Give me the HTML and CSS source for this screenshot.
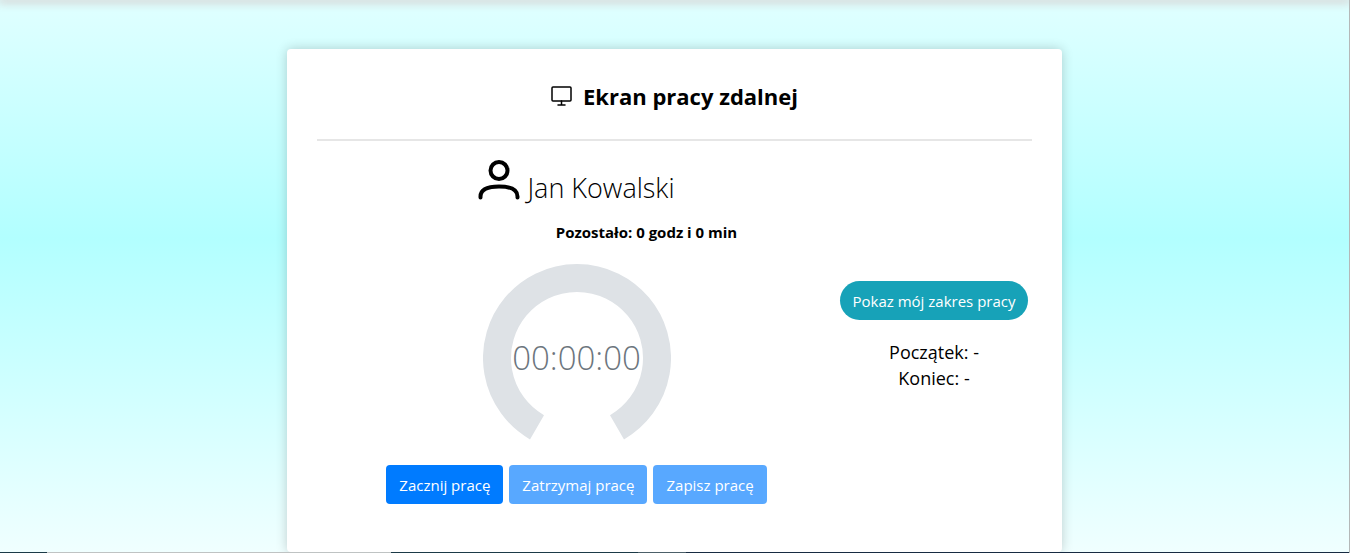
FILE: index.html
```html
<!DOCTYPE html>
<html lang="pl">
<head>
<meta charset="utf-8">
<title>Ekran pracy zdalnej</title>
<link rel="stylesheet" href="styles.css">
</head>
<body>
<div class="page">
  <div class="topbar"></div>
  <main class="card">
    <h1 class="title">
      <svg class="title-icon" viewBox="0 0 22 20" aria-hidden="true"><rect x="1" y="1" width="19" height="14" rx="1"/><path d="M10.500 15v4M7 19h7"/></svg>
      <span>Ekran pracy zdalnej</span>
    </h1>
    <hr class="rule">
    <div class="columns">
      <section class="work">
        <div class="user">
          <svg class="user-icon" viewBox="0 0 42 40" aria-hidden="true"><circle cx="21" cy="10.500" r="8.500"/><path d="M2.500 37.500v-1C2.500 29 10 26.500 21 26.500s18.500 2.500 18.500 10v1"/></svg>
          <span class="user-name">Jan Kowalski</span>
        </div>
        <p class="left-time">Pozostało: 0 godz i 0 min</p>
        <div class="gauge">
          <svg class="gauge-ring" viewBox="0 0 188 188" aria-hidden="true"><path d="M54 163.300A80 80 0 1 1 134 163.300"/></svg>
          <span class="gauge-value">00:00:00</span>
        </div>
        <div class="actions">
          <button class="btn" type="button">Zacznij pracę</button>
          <button class="btn" type="button" disabled>Zatrzymaj pracę</button>
          <button class="btn" type="button" disabled>Zapisz pracę</button>
        </div>
      </section>
      <section class="range">
        <button class="btn btn-info" type="button">Pokaz mój zakres pracy</button>
        <p class="range-text">Początek: -<br>Koniec: -</p>
      </section>
    </div>
  </main>
  <div class="bottom-line"></div>
</div>
</body>
</html>
```
FILE: styles.css
```css
* { box-sizing: border-box; }
body {
  margin: 0;
  color: #000;
  font-family: "Open Sans", "Noto Sans", sans-serif;
  font-size: 15px;
  line-height: 24px;
}
.page {
  min-height: 100vh;
  display: flex;
  flex-direction: column;
  overflow: hidden;
  border-right: 1px solid #b4b8b8;
  background: linear-gradient(#e0ffff, #b2ffff 43%, #f0ffff);
}
.topbar { box-shadow: 0 0 10px 2px rgba(200, 160, 160, .8); }
.card {
  width: calc(100% - 32px);
  max-width: 775px;
  margin: 49px auto 0;
  padding: 30px 30px 48px;
  border-radius: 4px;
  background: #fff;
  box-shadow: 0 0 12px rgba(0, 0, 0, .2);
}
.title {
  display: flex;
  justify-content: center;
  align-items: center;
  gap: 10px;
  margin: 0;
  font-size: 22px;
  line-height: 34px;
  font-weight: 700;
}
.title-icon { width: 22px; height: 20px; fill: none; stroke: #000; stroke-width: 1.500; stroke-linecap: round; }
.rule { margin: 26px 0 20px; border: 0; border-top: 2px solid #e6e6e6; }
.columns { display: grid; grid-template-columns: 1fr 196px; }
.work { display: flex; flex-direction: column; align-items: center; }
.user { display: flex; align-items: flex-end; gap: 7px; height: 43px; }
.user-icon { width: 42px; height: 40px; margin-bottom: 4px; fill: none; stroke: #000; stroke-width: 4; stroke-linecap: round; }
.user-name { font-size: 27px; line-height: 32px; font-weight: 350; }
.left-time { margin: 16px 0 20px; padding-left: 140px; font-weight: 700; }
.gauge { display: grid; place-items: center; width: 188px; height: 188px; }
.gauge > * { grid-area: 1 / 1; }
.gauge-ring { width: 100%; fill: none; stroke: #dee2e6; stroke-width: 28; }
.gauge-value { font-size: 33px; font-weight: 350; color: #6c757d; }
.actions { display: flex; gap: 6px; margin-top: 13px; }
.btn {
  height: 39px;
  padding: 0 13px;
  border: 0;
  border-radius: 4px;
  background: #007bff;
  color: #fff;
  font: inherit;
  white-space: nowrap;
}
.btn:disabled { opacity: .65; }
.range { display: flex; flex-direction: column; align-items: center; padding-top: 120px; }
.btn-info { border-radius: 20px; background: #17a2b8; }
.range-text { margin: 19px 0 0; font-size: 18px; line-height: 26px; font-weight: 400; text-align: center; }
.bottom-line {
  height: 1px;
  margin-top: auto;
  background: linear-gradient(90deg, #1b3a47 47px, #bfc3c3 47px 391px, #1b3a47 391px 638px, #4c6069 638px 686px, #172b42 686px);
}
```
